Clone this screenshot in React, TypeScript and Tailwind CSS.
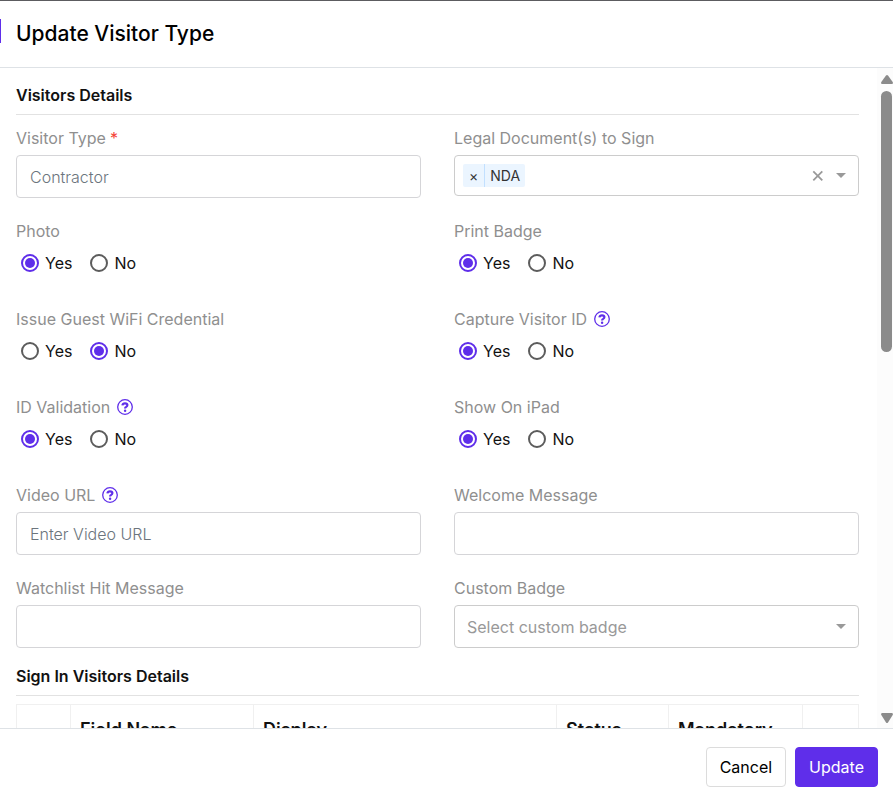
import { useState } from "react";
import type { ReactNode } from "react";

interface FieldProps {
  label: string;
  htmlFor: string;
  required?: boolean;
  help?: boolean;
  children: ReactNode;
}

const labelClass = "flex h-6 items-center text-base leading-6 text-[#8f8f8f]";

const inputClass =
  "block h-[43px] w-full rounded border border-[#d5d5d8] bg-white px-[13px] text-base font-light text-[#6c757d] outline-none placeholder:text-[#6c757d]";

function HelpButton({ topic }: { topic: string }) {
  return (
    <button type="button" aria-label={`Help: ${topic}`} className="ml-[7px] text-[#5f2eea]">
      <svg className="h-4 w-4" viewBox="0 0 16 16" fill="none" stroke="currentColor">
        <circle cx="8" cy="8" r="7.3" strokeWidth={1.3} />
        <path
          strokeWidth={2.2}
          d="M5.4 6.3 Q5.7 4.3 8 4.3 Q10.4 4.3 10.4 6.1 Q10.4 7.2 9.2 7.9 Q8.1 8.5 8.1 9.6"
        />
        <circle cx="8.1" cy="11.7" r="1.2" fill="currentColor" stroke="none" />
      </svg>
    </button>
  );
}

function Field({ label, htmlFor, required, help, children }: FieldProps) {
  return (
    <div className="pb-[21px]">
      <div className="mb-[5px] flex items-center">
        <label htmlFor={htmlFor} className={labelClass}>
          {label}
          {required && <span className="ml-1 text-[#f44336]">*</span>}
        </label>
        {help && <HelpButton topic={label} />}
      </div>
      {children}
    </div>
  );
}

interface RadioFieldProps {
  label: string;
  name: string;
  initial: "Yes" | "No";
  help?: boolean;
}

function RadioField({ label, name, initial, help }: RadioFieldProps) {
  const [value, setValue] = useState<string>(initial);

  return (
    <div role="radiogroup" aria-labelledby={`${name}-label`} className="pb-8">
      <div className="mb-2 flex items-center">
        <span id={`${name}-label`} className={labelClass}>
          {label}
        </span>
        {help && <HelpButton topic={label} />}
      </div>
      <div className="flex h-6 items-center gap-[18px] pl-[5px]">
        {["Yes", "No"].map((option) => (
          <label key={option} className="flex items-center gap-1.5 text-base leading-6 text-[#111]">
            <input
              type="radio"
              name={name}
              value={option}
              checked={value === option}
              onChange={() => setValue(option)}
              className="h-[18px] w-[18px] appearance-none rounded-full border-2 border-[#5c5c5c] bg-clip-content p-0.5 checked:border-[#5f2eea] checked:bg-[#5f2eea]"
            />
            {option}
          </label>
        ))}
      </div>
    </div>
  );
}

function Caret() {
  return (
    <span className="block h-0 w-0 border-x-5 border-t-5 border-x-transparent border-t-[#999]" />
  );
}

function LegalDocumentSelect() {
  const [docs, setDocs] = useState(["NDA"]);

  return (
    <div className="flex h-[41px] items-center rounded border border-[#ccc] pr-3 pl-2">
      {docs.map((doc) => (
        <span
          key={doc}
          className="mr-1 flex h-[23px] items-center rounded-xs bg-[#ebf5ff] text-[#333]"
        >
          <button
            type="button"
            aria-label={`Remove ${doc}`}
            onClick={() => setDocs(docs.filter((d) => d !== doc))}
            className="h-full border-r border-[#c2e0ff] px-1.5 text-sm leading-5"
          >
            ×
          </button>
          <span className="px-[5px] text-sm leading-5">{doc}</span>
        </span>
      ))}
      <input id="legal-documents" className="h-8 min-w-0 flex-1 outline-none" />
      <button
        type="button"
        aria-label="Clear all"
        onClick={() => setDocs([])}
        className="mr-3 text-[#999]"
      >
        <svg className="h-3 w-3" viewBox="0 0 12 12" stroke="currentColor" strokeWidth={1.8}>
          <path d="M1.3 1.3l9 9M10.3 1.3l-9 9" />
        </svg>
      </button>
      <button type="button" aria-label="Open documents">
        <Caret />
      </button>
    </div>
  );
}

function SectionTitle({ children }: { children: ReactNode }) {
  return (
    <h2 className="border-b border-[#e2e2e2] pb-[7px] text-base leading-6 font-semibold text-[#111]">
      {children}
    </h2>
  );
}

const columns = [
  { title: "", width: "w-[54px]" },
  { title: "Field Name", width: "w-[183px]" },
  { title: "Display", width: "" },
  { title: "Status", width: "w-[112px]" },
  { title: "Mandatory", width: "w-[134px]" },
  { title: "", width: "w-[56px]" },
];

export default function App() {
  return (
    <div className="flex h-screen flex-col border-t border-[#5c5c60] bg-white font-[Inter,sans-serif]">
      <header className="flex h-[67px] shrink-0 items-start border-b border-[#dee2e6] pt-[18px]">
        <div className="h-6 w-px bg-[#5f2eea]" />
        <h1 className="pl-[15px] text-[21px] leading-[30px] font-medium text-black">
          Update Visitor Type
        </h1>
      </header>

      <div className="flex min-h-0 flex-1">
        <main className="min-w-0 flex-1 overflow-y-auto pt-[15px] pr-[18px] pl-4 [scrollbar-width:none]">
          <SectionTitle>Visitors Details</SectionTitle>
          <div className="grid grid-cols-2 gap-x-[33px] pt-[11px]">
            <Field label="Visitor Type" htmlFor="visitor-type" required>
              <input id="visitor-type" defaultValue="Contractor" className={inputClass} />
            </Field>
            <Field label="Legal Document(s) to Sign" htmlFor="legal-documents">
              <LegalDocumentSelect />
            </Field>
            <RadioField label="Photo" name="photo" initial="Yes" />
            <RadioField label="Print Badge" name="print-badge" initial="Yes" />
            <RadioField label="Issue Guest WiFi Credential" name="guest-wifi" initial="No" />
            <RadioField label="Capture Visitor ID" name="capture-id" initial="Yes" help />
            <RadioField label="ID Validation" name="id-validation" initial="Yes" help />
            <RadioField label="Show On iPad" name="show-on-ipad" initial="Yes" />
            <Field label="Video URL" htmlFor="video-url" help>
              <input id="video-url" placeholder="Enter Video URL" className={inputClass} />
            </Field>
            <Field label="Welcome Message" htmlFor="welcome-message">
              <input id="welcome-message" className={inputClass} />
            </Field>
            <Field label="Watchlist Hit Message" htmlFor="watchlist-message">
              <input id="watchlist-message" className={inputClass} />
            </Field>
            <Field label="Custom Badge" htmlFor="custom-badge">
              <div className="relative">
                <select
                  id="custom-badge"
                  className="block h-[43px] w-full appearance-none rounded border border-[#ccc] bg-white px-3 text-base text-[#999] outline-none"
                >
                  <option>Select custom badge</option>
                </select>
                <div className="pointer-events-none absolute inset-y-0 right-[13px] flex items-center">
                  <Caret />
                </div>
              </div>
            </Field>
          </div>

          <div className="-mt-[5px]">
            <SectionTitle>Sign In Visitors Details</SectionTitle>
          </div>
          <table className="mt-2 w-full table-fixed border-collapse">
            <thead>
              <tr>
                {columns.map((col, i) => (
                  <th
                    key={i}
                    className={`${col.width} border border-[#f0f0f0] px-[9px] py-[13px] text-left text-lg leading-6 font-semibold text-[#111]`}
                  >
                    {col.title}
                  </th>
                ))}
              </tr>
            </thead>
          </table>
        </main>

        {/* scroll track */}
        <div aria-hidden="true" className="flex w-4 shrink-0 flex-col bg-[#fcfcfc] pt-[7px] pb-[5px] pl-1">
          <svg className="h-[9px] w-3" viewBox="0 0 12 9" fill="#8b8b8b">
            <path d="M5 0.6 Q6 -0.4 7 0.6 L11.7 7 Q12.4 8.6 11 9 H1 Q-0.4 8.6 0.3 7 Z" />
          </svg>
          <div className="mt-[7px] h-[261px] w-[11px] rounded-full bg-[#8b8b8b]" />
          <svg className="mt-auto h-[10px] w-3" viewBox="0 0 12 10" fill="#8b8b8b">
            <path d="M5 9.4 Q6 10.4 7 9.4 L11.7 2 Q12.4 0.4 11 0 H1 Q-0.4 0.4 0.3 2 Z" />
          </svg>
        </div>
      </div>

      <footer className="flex shrink-0 justify-end gap-[9px] border-t border-[#dee2e6] pt-[18px] pr-[15px] pb-[17px]">
        <button
          type="button"
          className="h-10 rounded border border-[#dcdcdc] bg-white px-[13px] text-base text-black"
        >
          Cancel
        </button>
        <button
          type="submit"
          className="h-10 rounded border border-[#5f2eea] bg-[#5f2eea] px-[13px] text-base text-white"
        >
          Update
        </button>
      </footer>
    </div>
  );
}
